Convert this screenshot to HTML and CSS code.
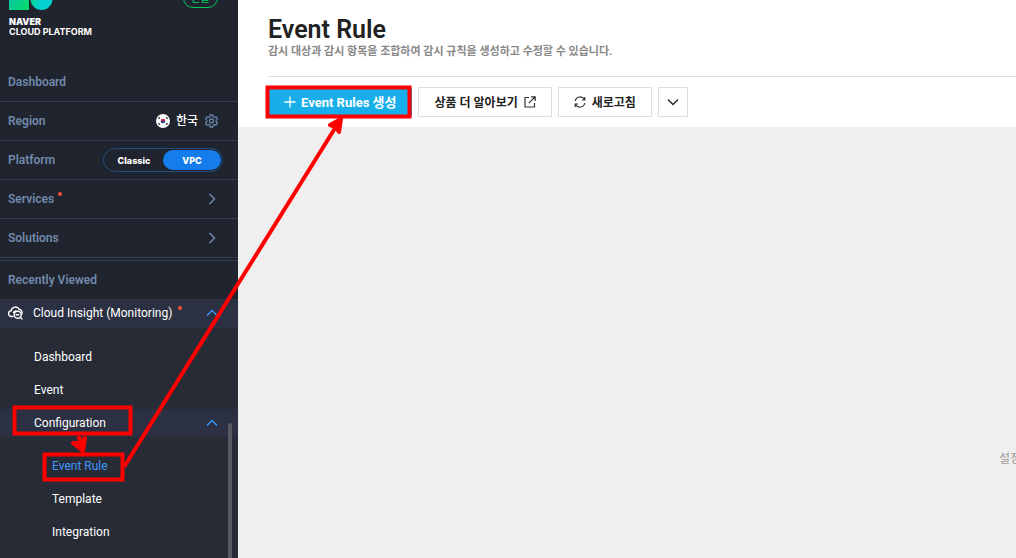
FILE: index.html
```html
<!DOCTYPE html>
<html lang="ko">

<head>
  <meta charset="UTF-8" />
  <meta name="viewport" content="width=device-width, initial-scale=1.0" />
  <title>Event Rule</title>
  <link rel="stylesheet" href="styles.css">
</head>

<body>
  <div class="app">
    <aside class="sidebar">
      <div class="brand">
        <div class="logo">
          <svg class="logo-mark" width="46" height="10" viewBox="0 0 46 10">
            <defs>
              <linearGradient id="square" x1="0" x2="1" y1="0" y2="1">
                <stop offset="0.3" stop-color="#08c9a0" />
                <stop offset="1" stop-color="#04df62" />
              </linearGradient>
              <linearGradient id="circle" x1="0" x2="1" y1="0" y2="0.6">
                <stop offset="0.1" stop-color="#04d97a" />
                <stop offset="0.65" stop-color="#04cfcf" />
              </linearGradient>
            </defs>
            <rect x="0" y="-10" width="20" height="20" fill="url(#square)" />
            <circle cx="32.500" cy="-1" r="11" fill="url(#circle)" />
          </svg>
          <strong>NAVER</strong>
          <span>CLOUD PLATFORM</span>
        </div>
        <button class="badge">콘솔</button>
      </div>

      <nav>
        <a class="row" href="#">Dashboard</a>
        <div class="row">
          <span>Region</span>
          <div class="region">
            <svg width="14" height="14" viewBox="0 0 14 14">
              <circle cx="7" cy="7" r="7" fill="#fff" />
              <path d="M4.700 7a2.300 2.300 0 0 1 4.600 0z" fill="#d8263c" />
              <path d="M4.700 7a2.300 2.300 0 0 0 4.600 0z" fill="#1d3f94" />
              <path d="M2.400 4.800l1.400-1.600M11.600 4.800l-1.400-1.600M2.400 9.200l1.400 1.600M11.600 9.200l-1.400 1.600" stroke="#333" stroke-width="1.300" />
            </svg>
            <span>한국</span>
            <button class="icon-button" aria-label="Region settings">
              <svg width="13" height="14" viewBox="0 0 13 14" fill="none" stroke="#6583a8" stroke-width="1.300" stroke-linejoin="round">
                <path d="M5.200 1h2.600l.4 1.700 1.200.7 1.700-.5 1.300 2.200L11.200 6.300v1.400l1.200 1.200-1.300 2.200-1.700-.5-1.200.7-.4 1.700H5.200l-.4-1.700-1.200-.7-1.700.5L.6 8.900l1.200-1.200V6.300L.6 5.100l1.300-2.200 1.700.5 1.200-.7z" />
                <circle cx="6.500" cy="7" r="2" />
              </svg>
            </button>
          </div>
        </div>
        <div class="row">
          <span>Platform</span>
          <div class="switch">
            <button>Classic</button>
            <button class="on">VPC</button>
          </div>
        </div>
        <a class="row" href="#">
          <span class="new">Services</span>
          <svg class="arrow" width="12" height="12" viewBox="0 0 12 12"><path d="M3.500 1l5 5-5 5" /></svg>
        </a>
        <a class="row" href="#">
          <span>Solutions</span>
          <svg class="arrow" width="12" height="12" viewBox="0 0 12 12"><path d="M3.500 1l5 5-5 5" /></svg>
        </a>

        <div class="recent-title">Recently Viewed</div>
        <a class="service" href="#">
          <svg width="16" height="14" viewBox="0 0 16 14" fill="none" stroke="#fff" stroke-width="1.400" stroke-linecap="round">
            <path d="M5 10.500H3.700A2.900 2.900 0 0 1 3.200 4.700 4.300 4.300 0 0 1 11.200 3.300a3.400 3.400 0 0 1 2.300 5.200" />
            <circle cx="9.700" cy="8.700" r="3.500" />
            <path d="M12.300 11.200l1.700 1.700M8.200 8.700h2.600M5.500 6.500a3.500 3.500 0 0 1 2.500-1.500" />
          </svg>
          <span class="new">Cloud Insight (Monitoring)</span>
          <svg class="arrow open" width="12" height="12" viewBox="0 0 12 12"><path d="M1 8.500l5-5 5 5" /></svg>
        </a>

        <div class="submenu">
          <a class="item" href="#">Dashboard</a>
          <a class="item" href="#">Event</a>
          <a class="item group" href="#">
            <span>Configuration</span>
            <svg class="arrow open" width="12" height="12" viewBox="0 0 12 12"><path d="M1 8.500l5-5 5 5" /></svg>
          </a>
          <a class="item sub active" href="#">Event Rule</a>
          <a class="item sub" href="#">Template</a>
          <a class="item sub" href="#">Integration</a>
          <div class="scrollbar"></div>
        </div>
      </nav>
    </aside>

    <main class="content">
      <header class="page-head">
        <h1>Event Rule</h1>
        <p>감시 대상과 감시 항목을 조합하여 감시 규칙을 생성하고 수정할 수 있습니다.</p>
      </header>
      <div class="toolbar">
        <button class="btn primary">
          <svg width="12" height="12" viewBox="0 0 12 12" fill="none" stroke="#fff" stroke-width="1.300"><path d="M6 0.500v11M0.500 6h11" /></svg>
          Event Rules 생성
        </button>
        <button class="btn">
          상품 더 알아보기
          <svg width="12" height="12" viewBox="0 0 12 12" fill="none" stroke="#333" stroke-width="1.200"><path d="M5 1.500H1v9.500h9.500V7M7 .8h4.200V5M11 1L4.800 7.200" /></svg>
        </button>
        <button class="btn">
          <svg width="12" height="12" viewBox="0 0 12 12" fill="none" stroke="#333" stroke-width="1.200"><path d="M1.200 5A5 5 0 0 1 10.500 3.500M10.800 7A5 5 0 0 1 1.500 8.500M10.800 1v3H8M1.200 11V8H4" /></svg>
          새로고침
        </button>
        <button class="btn more" aria-label="More">
          <svg width="12" height="8" viewBox="0 0 12 8" fill="none" stroke="#222" stroke-width="1.300"><path d="M1 1.500l5 5 5-5" /></svg>
        </button>
      </div>
      <div class="result">
        <p>설정된</p>
      </div>
    </main>

    <!-- guide marks drawn over the console -->
    <svg class="guide" width="440" height="500" viewBox="0 0 440 500" fill="none" stroke="#fe0000" stroke-width="4">
      <rect x="267.500" y="87.500" width="142" height="29" />
      <rect x="14.500" y="407.500" width="116" height="26" />
      <rect x="44.500" y="454.500" width="78" height="25" />
      <path d="M124 467L337 125" />
      <path d="M78.500 436l3 10" />
      <path d="M341 119l-11 6 6 2 3 5zM83 451l-10-8 7 0 5-5z" fill="#fe0000" stroke-linejoin="round" />
    </svg>
  </div>
</body>

</html>
```

FILE: styles.css
```css
* {
  box-sizing: border-box;
}

body {
  margin: 0;
  font-family: Roboto, "Noto Sans CJK KR", sans-serif;
  font-size: 12px;
  color: #222;
}

button {
  padding: 0;
  border: 0;
  background: none;
  font-family: inherit;
  color: inherit;
}

a {
  color: inherit;
  text-decoration: none;
}

svg {
  display: block;
  flex: none;
}

.app {
  display: flex;
  position: relative;
  height: 100vh;
  overflow: hidden;
}

/* sidebar */
.sidebar {
  flex: none;
  width: 238px;
  background: #20242e;
  color: #fff;
  overflow: hidden;
}

.brand {
  display: flex;
  justify-content: space-between;
  align-items: flex-start;
  height: 63px;
  padding: 0 20px 0 9px;
}

.logo {
  display: flex;
  flex-direction: column;
  font-family: Inter, sans-serif;
  font-size: 9px;
  font-weight: 700;
  line-height: 10px;
}

.logo-mark {
  margin-bottom: 7px;
}

.logo strong {
  font-weight: 900;
}

.badge {
  display: flex;
  align-items: flex-end;
  justify-content: center;
  width: 35px;
  height: 20px;
  margin-top: -12px;
  padding-bottom: 1px;
  border: 1px solid #05c95c;
  border-radius: 10px;
  color: #05c95c;
  font-size: 10px;
  font-weight: 500;
  line-height: 14px;
}

.row {
  display: flex;
  align-items: center;
  justify-content: space-between;
  height: 39px;
  padding: 0 20px 0 8px;
  border-bottom: 1px solid #323d54;
  color: #7089ab;
  font-weight: 600;
}

.region {
  display: flex;
  align-items: center;
  gap: 6px;
  color: #fff;
  font-weight: 500;
  line-height: 16px;
}

.icon-button {
  margin-left: 1px;
}

.switch {
  display: flex;
  width: 120px;
  height: 24px;
  margin-right: -5px;
  padding: 1px;
  border: 1px solid #1c4d80;
  border-radius: 12px;
}

.switch button {
  flex: 1;
  border-radius: 10px;
  color: #fff;
  font-family: Inter, sans-serif;
  font-size: 9px;
  font-weight: 800;
}

.switch .on {
  background: #157deb;
}

.arrow {
  fill: none;
  stroke: #7089ab;
  stroke-width: 1.5;
}

.arrow.open {
  margin-left: auto;
  stroke: #3d94f6;
}

.new {
  display: flex;
  align-items: flex-start;
}

.new::after {
  content: "";
  width: 4px;
  height: 4px;
  margin-left: 4px;
  border-radius: 50%;
  background: #f0503c;
}

.recent-title {
  height: 41px;
  margin-top: 2px;
  border-top: 1px solid #323d54;
  color: #7089ab;
  font-weight: 600;
  line-height: 38px;
  padding-left: 8px;
}

.service {
  display: flex;
  align-items: center;
  gap: 9px;
  height: 29px;
  margin-top: -2px;
  padding: 0 20px 1px 8px;
  background: #2b3142;
}

.service .new::after {
  margin-left: 6px;
}

.submenu {
  position: relative;
  height: 230px;
  padding-top: 12px;
  background: #262b36;
}

.item {
  display: flex;
  align-items: center;
  height: 33px;
  padding: 0 20px 0 34px;
}

.item.group {
  height: 28px;
  margin: 3px 0 12px;
  background: #2b3142;
}

.item.sub {
  padding-left: 52px;
}

.item.active {
  color: #4196fa;
}

.scrollbar {
  position: absolute;
  top: 95px;
  right: 6px;
  bottom: 0;
  width: 4px;
  border-radius: 2px 2px 0 0;
  background: #555961;
}

/* content */
.content {
  display: flex;
  flex: 1;
  flex-direction: column;
  min-width: 0;
  background: #fff;
}

.page-head {
  height: 77px;
  margin-left: 30px;
  padding-top: 15px;
  border-bottom: 1px solid #ddd;
}

.page-head h1 {
  margin: 0;
  font-size: 25px;
  font-weight: 600;
  line-height: 29px;
}

.page-head p {
  margin: 0;
  color: #888;
  font-size: 11px;
  font-weight: 700;
  line-height: 16px;
}

.toolbar {
  display: flex;
  gap: 6px;
  padding: 10px 0 10px 30px;
}

.btn {
  display: flex;
  align-items: center;
  justify-content: center;
  gap: 6px;
  height: 30px;
  padding: 0 15px 1px;
  border: 1px solid #ddd;
  border-radius: 1px;
  background: #fff;
  font-size: 12px;
  font-weight: 600;
  white-space: nowrap;
}

.btn.primary {
  border-color: #18aeea;
  background: #18aeea;
  color: #fff;
  font-size: 13px;
  font-weight: 700;
  gap: 5px;
}

.btn.more {
  width: 30px;
  padding: 0;
}

.result {
  display: flex;
  flex: 1;
  justify-content: flex-end;
  overflow: hidden;
  background: #efefef;
}

.result p {
  flex: none;
  width: 17px;
  margin: 323px 0 0;
  color: #999;
  font-size: 12px;
  line-height: 18px;
  white-space: nowrap;
}

.guide {
  position: absolute;
  top: 0;
  left: 0;
  pointer-events: none;
}
```
